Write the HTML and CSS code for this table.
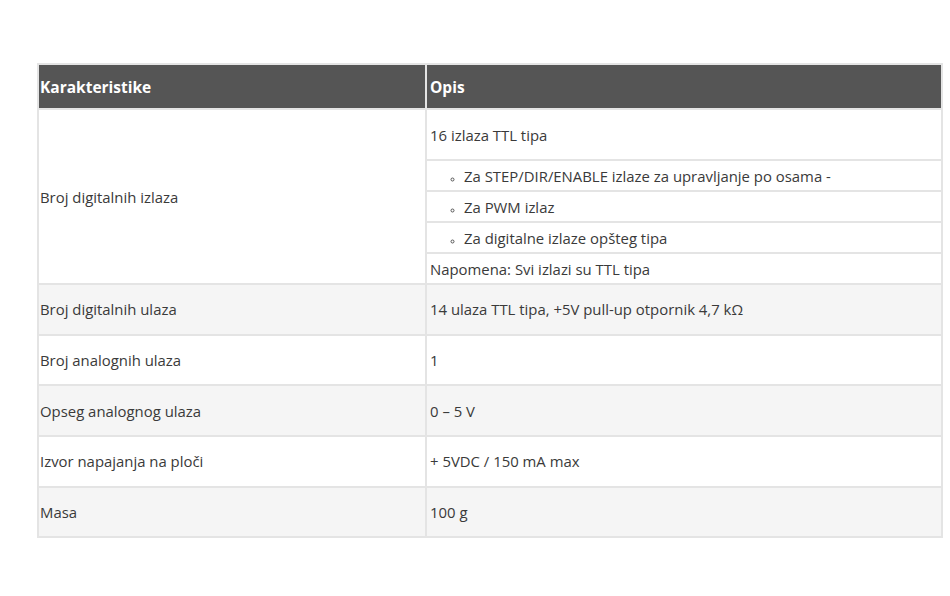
FILE: index.html
```html
<!DOCTYPE html>
<html lang="sr">
<head>
<meta charset="utf-8">
<title>Karakteristike</title>
<link rel="stylesheet" href="styles.css">
</head>
<body>
<table class="spec">
  <thead>
    <tr><th class="c1">Karakteristike</th><th class="c2">Opis</th></tr>
  </thead>
  <tbody>
    <tr class="first"><td rowspan="5" class="c1">Broj digitalnih izlaza</td><td class="c2">16 izlaza TTL tipa</td></tr>
    <tr class="sub"><td class="c2"><ul class="bul"><li>Za STEP/DIR/ENABLE izlaze za upravljanje po osama -</li></ul></td></tr>
    <tr class="sub"><td class="c2"><ul class="bul"><li>Za PWM izlaz</li></ul></td></tr>
    <tr class="sub"><td class="c2"><ul class="bul"><li>Za digitalne izlaze opšteg tipa</li></ul></td></tr>
    <tr class="sub"><td class="c2">Napomena: Svi izlazi su TTL tipa</td></tr>
    <tr class="alt"><td class="c1">Broj digitalnih ulaza</td><td class="c2">14 ulaza TTL tipa, +5V pull-up otpornik 4,7 kΩ</td></tr>
    <tr class="row"><td class="c1">Broj analognih ulaza</td><td class="c2">1</td></tr>
    <tr class="alt"><td class="c1">Opseg analognog ulaza</td><td class="c2">0 – 5 V</td></tr>
    <tr class="row"><td class="c1">Izvor napajanja na ploči</td><td class="c2">+ 5VDC / 150 mA max</td></tr>
    <tr class="alt"><td class="c1">Masa</td><td class="c2">100 g</td></tr>
  </tbody>
</table>
</body>
</html>
```
FILE: styles.css
```css
html, body {
  margin: 0;
  padding: 0;
  background: #ffffff;
}
body {
  padding: 63px 0 0 37px;
  font-family: "Open Sans", "Liberation Sans", sans-serif;
  color: #3a3a3a;
  font-size: 14.9px;
}
.spec {
  border-collapse: collapse;
  width: 906px;
  table-layout: fixed;
}
.spec th, .spec td {
  border: 2px solid #e4e4e4;
  text-align: left;
  padding: 0 0 0 1px;
  vertical-align: middle;
  line-height: 20px;
}
.spec .c2 { padding-left: 3px; }
.spec th {
  background: #555555;
  color: #ffffff;
  font-weight: 700;
  font-size: 15.5px;
  height: 43px;
}
.spec th.c1 { width: 385px; }
.spec tr.first td { height: 49px; background: #ffffff; }
.spec tr.sub td { height: 29px; background: #ffffff; }
.spec tr.row td { height: 48.7px; background: #ffffff; }
.spec tr.alt td { height: 48.7px; background: #f5f5f5; }
.bul {
  margin: 0;
  padding: 0 0 0 34px;
  list-style: circle;
}
.bul li::marker {
  font-size: 9px;
  color: #555;
}
```
